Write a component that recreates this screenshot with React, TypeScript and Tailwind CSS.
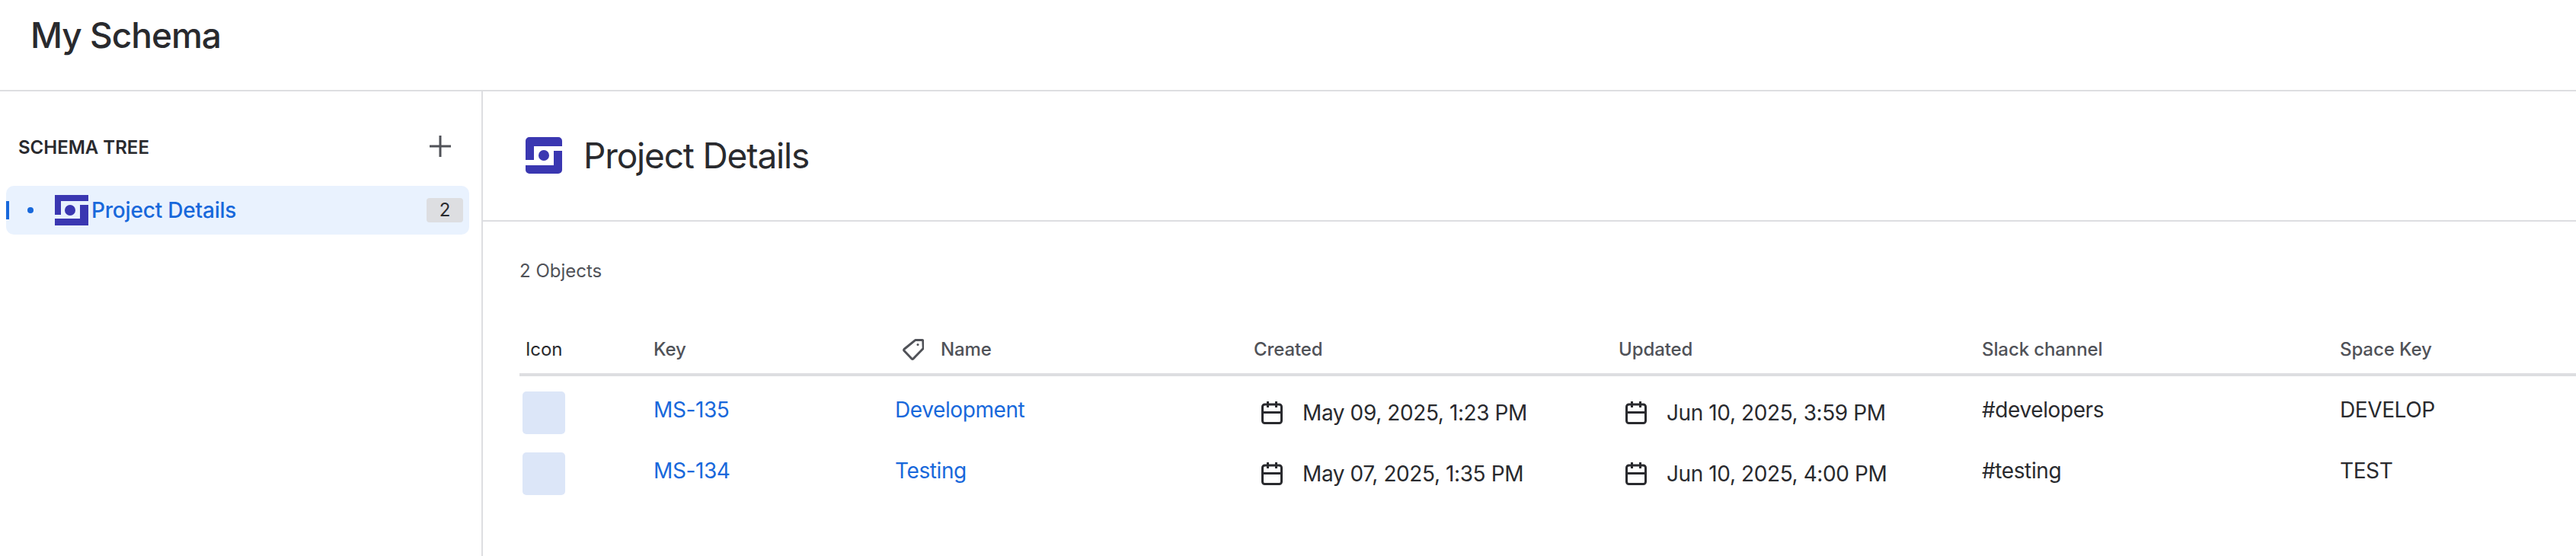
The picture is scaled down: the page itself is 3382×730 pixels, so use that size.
function LogoRound() {
  return (
    <svg width="48" height="48" viewBox="0 0 48 48" fill="#3A37B1" className="shrink-0">
      <path d="M0 5a5 5 0 0 1 5-5h38a5 5 0 0 1 5 5v7H11v18H0z" />
      <path d="M48 43a5 5 0 0 1-5 5H5a5 5 0 0 1-5-5v-6h37V18h11z" />
      <circle cx="24" cy="24" r="7" />
    </svg>
  );
}

function LogoSquare() {
  return (
    <svg width="44" height="40" viewBox="0 0 44 40" fill="#3A37B1" className="shrink-0">
      <path d="M0 0h44v8H8v18H0z" />
      <path d="M44 13v27H0v-9h33V13z" />
      <circle cx="20" cy="20" r="7" />
    </svg>
  );
}

function CalendarIcon() {
  return (
    <svg width="28" height="30" viewBox="0 0 28 30" fill="none" stroke="#292A2E" strokeWidth="3" className="shrink-0">
      <rect x="1.5" y="4" width="25" height="24.5" rx="3" />
      <path d="M1.5 14.5h25" />
      <path d="M8.5 0v8M19.5 0v8" />
    </svg>
  );
}

function TagIcon() {
  return (
    <svg width="28" height="28" viewBox="0 0 28 28" fill="none" stroke="#505258" strokeWidth="3" strokeLinejoin="round" className="shrink-0">
      <path d="M17 1.5h9a.8.8 0 0 1 .8.8l.4 9.7a1 1 0 0 1-.3.7L14 26a1.4 1.4 0 0 1-2 0L2 15.5a1.4 1.4 0 0 1 0-2L16.3 1.8a1 1 0 0 1 .7-.3z" />
      <circle cx="20" cy="7.5" r="1.5" fill="#505258" stroke="none" />
    </svg>
  );
}

function DateCell({ text, className }: { text: string; className: string }) {
  return (
    <div className={`flex items-center gap-[26px] ${className}`}>
      <CalendarIcon />
      <span className="text-[28px] leading-[32px] tracking-[-0.4px] text-[#292A2E] whitespace-nowrap">{text}</span>
    </div>
  );
}

const rows = [
  { key: "MS-135", name: "Development", created: "May 09, 2025, 1:23 PM", updated: "Jun 10, 2025, 3:59 PM", slack: "#developers", space: "DEVELOP" },
  { key: "MS-134", name: "Testing", created: "May 07, 2025, 1:35 PM", updated: "Jun 10, 2025, 4:00 PM", slack: "#testing", space: "TEST" },
];

const gridCols = "grid grid-cols-[169px_317px_470px_479px_477px_470px_1fr]";

export default function App() {
  return (
    <div className="h-screen flex flex-col overflow-hidden bg-white text-[#292A2E] font-['Inter','Liberation_Sans',sans-serif]">
      <header className="h-[120px] shrink-0 border-b-2 border-[#DDDEE1] pl-10 pt-[18px]">
        <h1 className="text-[46px] leading-[56px] font-medium tracking-[-1px]">My Schema</h1>
      </header>
      <div className="flex flex-1 min-h-0">
        <aside className="w-[634px] shrink-0 border-r-2 border-[#DDDEE1] pl-2 pr-4 pt-[58px]">
          <div className="flex items-center justify-between h-8 pl-4 pr-6">
            <span className="text-[24px] leading-8 font-semibold">SCHEMA TREE</span>
            <svg width="28" height="28" viewBox="0 0 28 28" stroke="#505258" strokeWidth="3" fill="none" className="-mt-1">
              <path d="M14 0v28M0 14h28" />
            </svg>
          </div>
          <div className="relative mt-[34px] flex items-center h-16 rounded-[10px] bg-[#E9F2FE] pl-7 pr-2">
            <span className="absolute left-0 top-5 w-1 h-6 bg-[#1868DB]" />
            <span className="w-2 h-2 rounded-full bg-[#1868DB]" />
            <span className="ml-7"><LogoSquare /></span>
            <span className="ml-1 text-[28px] leading-8 font-medium tracking-[-0.2px] text-[#1868DB]">Project Details</span>
            <span className="ml-auto w-12 h-8 rounded bg-[#DDDEE1] flex items-center justify-center text-[24px] leading-8">2</span>
          </div>
        </aside>
        <main className="flex-1 min-w-0">
          <div className="h-[171px] border-b-2 border-[#DDDEE1] flex items-center gap-[28px] pl-14 pb-[2px]">
            <LogoRound />
            <h2 className="text-[46px] leading-[56px] tracking-[-1.15px]">Project Details</h2>
          </div>
          <div className="pl-12 pt-[49px]">
            <p className="text-[24px] leading-8 text-[#505258]">2 Objects</p>
            <div className={`${gridCols} mt-[60px] h-[62px] border-b-4 border-[#DDDEE1] items-center pb-1 text-[24px] leading-8 tracking-[-0.1px] text-[#505258] font-medium`}>
              <span className="pl-2 text-[#292A2E] font-normal">Icon</span>
              <span className="pl-[7px]">Key</span>
              <span className="pl-[17px] flex items-center gap-[22px]"><TagIcon />Name</span>
              <span className="pl-2">Created</span>
              <span className="pl-2">Updated</span>
              <span className="pl-2">Slack channel</span>
              <span className="pl-2">Space Key</span>
            </div>
            <div className="pt-2">
              {rows.map((r) => (
                <div key={r.key} className={`${gridCols} h-20 items-center text-[28px] leading-8 tracking-[-0.4px]`}>
                  <div className="pl-1">
                    <div className="w-14 h-14 rounded-[5px] bg-[#DCE6F8]" />
                  </div>
                  <a className="pl-[7px] pb-2 text-[#1868DB]">{r.key}</a>
                  <a className="pl-[7px] pb-2 text-[#1868DB]">{r.name}</a>
                  <DateCell text={r.created} className="pl-[18px]" />
                  <DateCell text={r.updated} className="pl-[17px]" />
                  <span className="pl-2 pb-2">{r.slack}</span>
                  <span className="pl-2 pb-2">{r.space}</span>
                </div>
              ))}
            </div>
          </div>
        </main>
      </div>
    </div>
  );
}
